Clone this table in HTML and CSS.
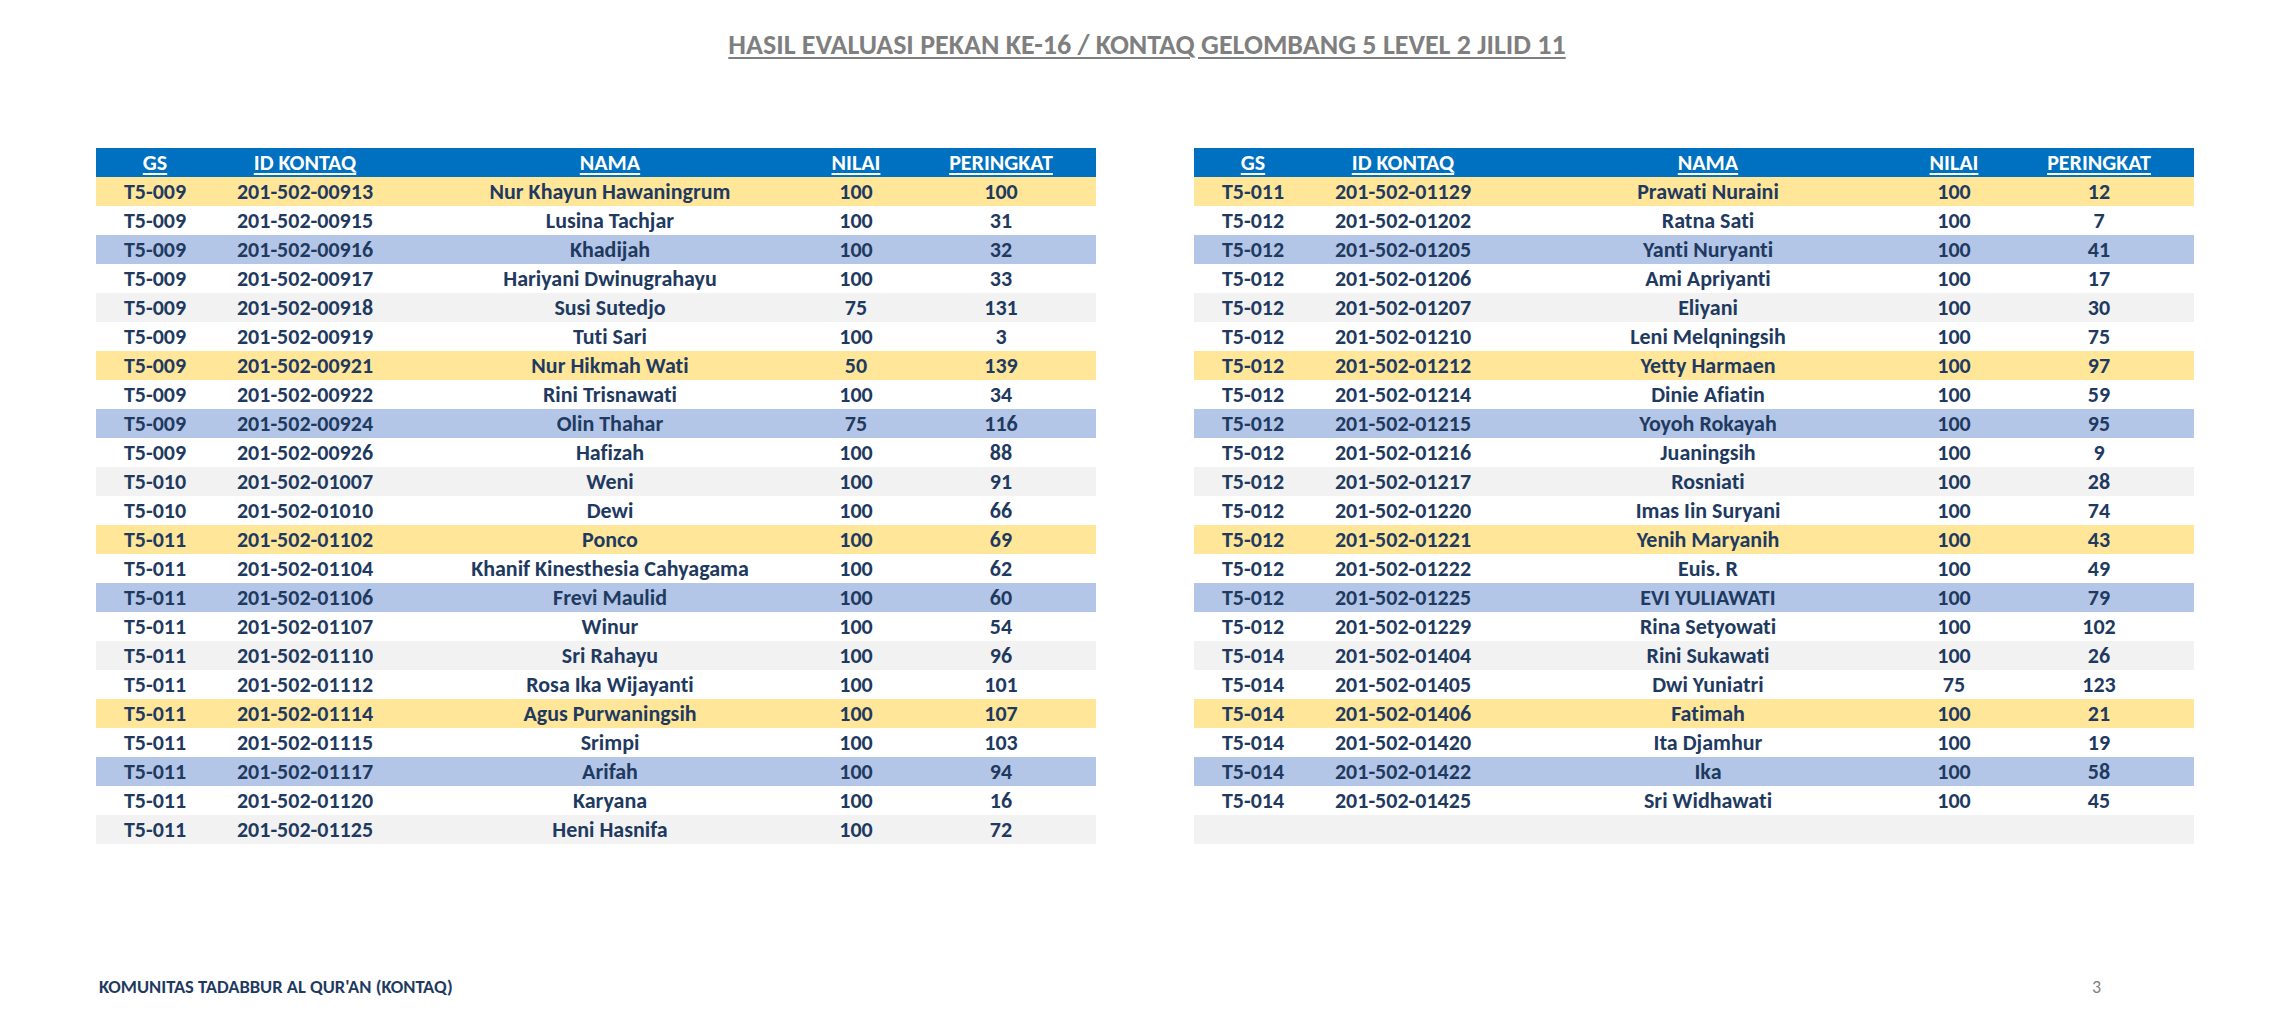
FILE: index.html
```html
<!DOCTYPE html>
<html lang="id">
<head>
<meta charset="utf-8">
<title>Hasil Evaluasi Pekan Ke-16</title>
<link rel="stylesheet" href="styles.css">
</head>
<body>
<div class="page">
  <h1 class="title">HASIL EVALUASI PEKAN KE-16 / KONTAQ GELOMBANG 5 LEVEL 2 JILID 11</h1>
  <div class="tables">
    <div class="table">
      <div class="row head"><span>GS</span><span>ID KONTAQ</span><span>NAMA</span><span>NILAI</span><span>PERINGKAT</span></div>
      <div class="row"><span>T5-009</span><span>201-502-00913</span><span>Nur Khayun Hawaningrum</span><span>100</span><span>100</span></div>
      <div class="row"><span>T5-009</span><span>201-502-00915</span><span>Lusina Tachjar</span><span>100</span><span>31</span></div>
      <div class="row"><span>T5-009</span><span>201-502-00916</span><span>Khadijah</span><span>100</span><span>32</span></div>
      <div class="row"><span>T5-009</span><span>201-502-00917</span><span>Hariyani Dwinugrahayu</span><span>100</span><span>33</span></div>
      <div class="row"><span>T5-009</span><span>201-502-00918</span><span>Susi Sutedjo</span><span>75</span><span>131</span></div>
      <div class="row"><span>T5-009</span><span>201-502-00919</span><span>Tuti Sari</span><span>100</span><span>3</span></div>
      <div class="row"><span>T5-009</span><span>201-502-00921</span><span>Nur Hikmah Wati</span><span>50</span><span>139</span></div>
      <div class="row"><span>T5-009</span><span>201-502-00922</span><span>Rini Trisnawati</span><span>100</span><span>34</span></div>
      <div class="row"><span>T5-009</span><span>201-502-00924</span><span>Olin Thahar</span><span>75</span><span>116</span></div>
      <div class="row"><span>T5-009</span><span>201-502-00926</span><span>Hafizah</span><span>100</span><span>88</span></div>
      <div class="row"><span>T5-010</span><span>201-502-01007</span><span>Weni</span><span>100</span><span>91</span></div>
      <div class="row"><span>T5-010</span><span>201-502-01010</span><span>Dewi</span><span>100</span><span>66</span></div>
      <div class="row"><span>T5-011</span><span>201-502-01102</span><span>Ponco</span><span>100</span><span>69</span></div>
      <div class="row"><span>T5-011</span><span>201-502-01104</span><span>Khanif Kinesthesia Cahyagama</span><span>100</span><span>62</span></div>
      <div class="row"><span>T5-011</span><span>201-502-01106</span><span>Frevi Maulid</span><span>100</span><span>60</span></div>
      <div class="row"><span>T5-011</span><span>201-502-01107</span><span>Winur</span><span>100</span><span>54</span></div>
      <div class="row"><span>T5-011</span><span>201-502-01110</span><span>Sri Rahayu</span><span>100</span><span>96</span></div>
      <div class="row"><span>T5-011</span><span>201-502-01112</span><span>Rosa Ika Wijayanti</span><span>100</span><span>101</span></div>
      <div class="row"><span>T5-011</span><span>201-502-01114</span><span>Agus Purwaningsih</span><span>100</span><span>107</span></div>
      <div class="row"><span>T5-011</span><span>201-502-01115</span><span>Srimpi</span><span>100</span><span>103</span></div>
      <div class="row"><span>T5-011</span><span>201-502-01117</span><span>Arifah</span><span>100</span><span>94</span></div>
      <div class="row"><span>T5-011</span><span>201-502-01120</span><span>Karyana</span><span>100</span><span>16</span></div>
      <div class="row"><span>T5-011</span><span>201-502-01125</span><span>Heni Hasnifa</span><span>100</span><span>72</span></div>
    </div>
    <div class="table">
      <div class="row head"><span>GS</span><span>ID KONTAQ</span><span>NAMA</span><span>NILAI</span><span>PERINGKAT</span></div>
      <div class="row"><span>T5-011</span><span>201-502-01129</span><span>Prawati Nuraini</span><span>100</span><span>12</span></div>
      <div class="row"><span>T5-012</span><span>201-502-01202</span><span>Ratna Sati</span><span>100</span><span>7</span></div>
      <div class="row"><span>T5-012</span><span>201-502-01205</span><span>Yanti Nuryanti</span><span>100</span><span>41</span></div>
      <div class="row"><span>T5-012</span><span>201-502-01206</span><span>Ami Apriyanti</span><span>100</span><span>17</span></div>
      <div class="row"><span>T5-012</span><span>201-502-01207</span><span>Eliyani</span><span>100</span><span>30</span></div>
      <div class="row"><span>T5-012</span><span>201-502-01210</span><span>Leni Melqningsih</span><span>100</span><span>75</span></div>
      <div class="row"><span>T5-012</span><span>201-502-01212</span><span>Yetty Harmaen</span><span>100</span><span>97</span></div>
      <div class="row"><span>T5-012</span><span>201-502-01214</span><span>Dinie Afiatin</span><span>100</span><span>59</span></div>
      <div class="row"><span>T5-012</span><span>201-502-01215</span><span>Yoyoh Rokayah</span><span>100</span><span>95</span></div>
      <div class="row"><span>T5-012</span><span>201-502-01216</span><span>Juaningsih</span><span>100</span><span>9</span></div>
      <div class="row"><span>T5-012</span><span>201-502-01217</span><span>Rosniati</span><span>100</span><span>28</span></div>
      <div class="row"><span>T5-012</span><span>201-502-01220</span><span>Imas Iin Suryani</span><span>100</span><span>74</span></div>
      <div class="row"><span>T5-012</span><span>201-502-01221</span><span>Yenih Maryanih</span><span>100</span><span>43</span></div>
      <div class="row"><span>T5-012</span><span>201-502-01222</span><span>Euis. R</span><span>100</span><span>49</span></div>
      <div class="row"><span>T5-012</span><span>201-502-01225</span><span>EVI YULIAWATI</span><span>100</span><span>79</span></div>
      <div class="row"><span>T5-012</span><span>201-502-01229</span><span>Rina Setyowati</span><span>100</span><span>102</span></div>
      <div class="row"><span>T5-014</span><span>201-502-01404</span><span>Rini Sukawati</span><span>100</span><span>26</span></div>
      <div class="row"><span>T5-014</span><span>201-502-01405</span><span>Dwi Yuniatri</span><span>75</span><span>123</span></div>
      <div class="row"><span>T5-014</span><span>201-502-01406</span><span>Fatimah</span><span>100</span><span>21</span></div>
      <div class="row"><span>T5-014</span><span>201-502-01420</span><span>Ita Djamhur</span><span>100</span><span>19</span></div>
      <div class="row"><span>T5-014</span><span>201-502-01422</span><span>Ika</span><span>100</span><span>58</span></div>
      <div class="row"><span>T5-014</span><span>201-502-01425</span><span>Sri Widhawati</span><span>100</span><span>45</span></div>
      <div class="row"><span></span><span></span><span></span><span></span><span></span></div>
    </div>
  </div>
  <footer class="footer">
    <span class="org">KOMUNITAS TADABBUR AL QUR'AN (KONTAQ)</span>
    <span class="pagenum">3</span>
  </footer>
</div>
</body>
</html>
```

FILE: styles.css
```css
html, body {
  margin: 0;
  padding: 0;
  background: #ffffff;
}

body {
  font-family: Carlito, Calibri, "Liberation Sans", sans-serif;
  font-variant-ligatures: none;
  color: #1f3a60;
}

.page {
  width: 2294px;
  height: 1029px;
  overflow: hidden;
}

.title {
  margin: 30px 0 0 0;
  font-size: 28px;
  line-height: 30px;
  font-weight: 700;
  color: #7f7f7f;
  text-align: center;
  text-decoration: underline;
  text-decoration-thickness: 2px;
  text-underline-offset: 3px;
}

.tables {
  display: flex;
  gap: 98px;
  margin-top: 88px;
  padding-left: 96px;
}

.table {
  width: 1000px;
  display: flex;
  flex-direction: column;
}

.row {
  display: grid;
  grid-template-columns: 82px 218px 392px 100px 190px;
  padding-left: 18px;
  height: 29px;
  line-height: 29px;
  font-size: 22px;
  font-weight: 700;
  text-align: center;
  white-space: nowrap;
  background: #ffffff;
}

.row:nth-child(6n+2) { background: #ffe699; }
.row:nth-child(6n+4) { background: #b4c6e7; }
.row:nth-child(6n+6) { background: #f2f2f2; }

.row.head {
  background: #0070c0;
  color: #ffffff;
}

.row.head span {
  text-decoration: underline;
  text-decoration-thickness: 2px;
  text-underline-offset: 3px;
}

.footer {
  display: flex;
  align-items: center;
  margin-top: 133px;
  padding-left: 99px;
  padding-right: 193px;
  height: 20px;
  line-height: 20px;
}

.org {
  font-size: 18.5px;
  font-weight: 700;
  color: #1f3a60;
}

.pagenum {
  margin-left: auto;
  font-size: 18px;
  color: #7f7f7f;
}
```
